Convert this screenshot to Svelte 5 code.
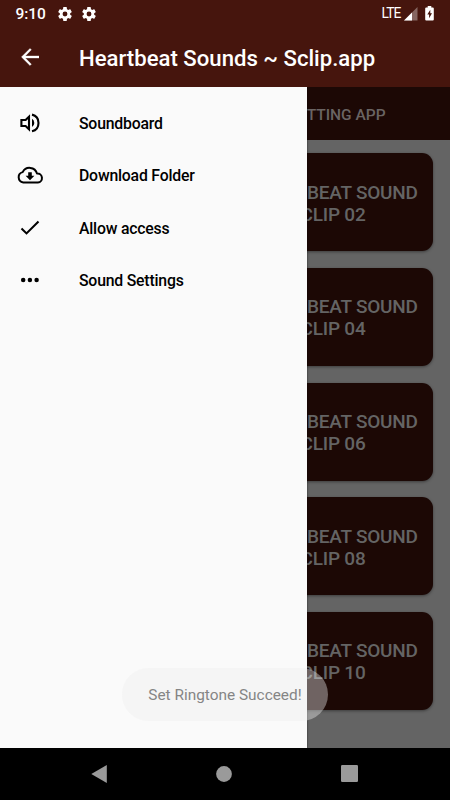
<script>
  const clips = ['02', '04', '06', '08', '10'];
  const gear = 'M19.43 12.98c.04-.32.07-.64.07-.98s-.03-.66-.07-.98l2.11-1.65c.19-.15.24-.42.12-.64l-2-3.46c-.12-.22-.39-.3-.61-.22l-2.49 1c-.52-.4-1.08-.73-1.69-.98l-.38-2.65A.49.49 0 0 0 14 2h-4c-.25 0-.46.18-.49.42l-.38 2.65c-.61.25-1.17.59-1.69.98l-2.49-1c-.23-.09-.49 0-.61.22l-2 3.46c-.13.22-.07.49.12.64l2.11 1.65c-.04.32-.07.65-.07.98s.03.66.07.98l-2.11 1.65c-.19.15-.24.42-.12.64l2 3.46c.12.22.39.3.61.22l2.49-1c.52.4 1.08.73 1.69.98l.38 2.65c.03.24.24.42.49.42h4c.25 0 .46-.18.49-.42l.38-2.65c.61-.25 1.17-.59 1.69-.98l2.49 1c.23.09.49 0 .61-.22l2-3.46c.12-.22.07-.49-.12-.64l-2.11-1.65zM12 15.5a3.5 3.5 0 1 1 0-7 3.5 3.5 0 0 1 0 7z';
</script>

<div class="screen">
  <header>
    <div class="status">
      <span class="time">9:10</span>
      <svg class="gear" viewBox="1.9 1.9 20.2 20.2"><path d={gear} /></svg>
      <svg class="gear" viewBox="1.9 1.9 20.2 20.2"><path d={gear} /></svg>
      <span class="lte">LTE</span>
      <svg class="signal" viewBox="0 0 14 14"><path d="M0 13.5 13.5 0V13.5z" opacity=".35" /><path d="M0 13.5 8 5.5V13.5z" /></svg>
      <svg class="battery" viewBox="0 0 9 15"><path fill-rule="evenodd" d="M2.7 0h3.6v1.4h1.5q1 0 1 1v11q0 1-1 1H1.2q-1 0-1-1v-11q0-1 1-1h1.5zM5.3 3.8 2.3 8.6h1.8v3.7L7 7.3H5.3z" /></svg>
    </div>
    <div class="appbar">
      <svg class="back" viewBox="0 0 18 18"><path d="M18 7.9H4.4l6-6.100L9 .4.400 9 9 17.600l1.400-1.400-6-6.100H18z" stroke="#fff" stroke-width=".3" /></svg>
      <h1>Heartbeat Sounds ~ Sclip.app</h1>
    </div>
  </header>

  <main>
    <div class="tabs"><span>SETTING APP</span></div>
    <div class="list">
      {#each clips as clip}
        <div class="card">HEARTBEAT SOUND<br />CLIP {clip}</div>
      {/each}
    </div>

    <nav class="drawer">
      <div class="item">
        <span class="icon"><svg width="20" height="20" viewBox="0 0 20 20">
          <path d="M1.400 7h4.200l3.400-3.300v12.600L5.600 13H1.400z" fill="none" stroke="#000" stroke-width="2.100" />
          <path d="M12 5.800q2.300 1.400 2.300 4.100T12 14z" />
          <path d="M12 1.600c4.100.9 6.500 4.200 6.500 8.300s-2.400 7.400-6.500 8.300" fill="none" stroke="#000" stroke-width="2.100" />
        </svg></span>
        <span>Soundboard</span>
      </div>
      <div class="item">
        <span class="icon"><svg width="28" height="20" viewBox="0 0 28 20">
          <path d="M7.300 17.500a5.300 5.300 0 0 1-.6-10.400A7.700 7.700 0 0 1 21 8.500a4.500 4.500 0 0 1 .9 9z" fill="none" stroke="#000" stroke-width="2" stroke-linejoin="round" />
          <path d="M12.200 7.300h3.600v3.500h2.600L14 15.200l-4.400-4.400h2.600z" />
        </svg></span>
        <span>Download Folder</span>
      </div>
      <div class="item">
        <span class="icon"><svg width="20" height="16" viewBox="0 0 20 16"><path d="m1.500 8.500 5 4.900L18.500 1.500" fill="none" stroke="#000" stroke-width="2.100" /></svg></span>
        <span>Allow access</span>
      </div>
      <div class="item">
        <span class="icon"><svg width="20" height="6" viewBox="0 0 20 6"><circle cx="3.200" cy="3" r="2.250" /><circle cx="9.900" cy="3" r="2.250" /><circle cx="16.600" cy="3" r="2.250" /></svg></span>
        <span>Sound Settings</span>
      </div>
    </nav>
    <div class="toast"><span>Set Ringtone Succeed!</span></div>
  </main>

  <footer>
    <svg width="16" height="20" viewBox="0 0 16 20"><path d="M.3 10 15.800.900v18.200z" /></svg>
    <svg width="16" height="16" viewBox="0 0 16 16"><circle cx="8" cy="8" r="7.900" /></svg>
    <svg width="17" height="17" viewBox="0 0 17 17"><rect width="17" height="17" rx="1.200" /></svg>
  </footer>
</div>

<style>
  .screen {
    width: 450px;
    height: 800px;
    display: flex;
    flex-direction: column;
    overflow: hidden;
    background: #000;
    font-family: Roboto, sans-serif;
  }
  svg { display: block; flex: none; }
  header { height: 87px; background: #46150d; color: #fff; fill: #fff; }
  .status { height: 28px; display: flex; align-items: center; box-sizing: border-box; padding: 0 16px 0 15.500px; }
  .time { width: 42.500px; font-size: 15.500px; font-weight: 500; letter-spacing: -0.100px; line-height: 28px; }
  .gear { width: 14px; height: 14px; margin-right: 10px; margin-top: -1px; }
  .lte { margin-left: auto; font-size: 13.800px; letter-spacing: -0.900px; line-height: 26px; margin-top: -2px; }
  .signal { width: 14px; height: 14px; margin-left: 3px; margin-top: -1px; }
  .battery { width: 9px; height: 15px; margin-left: 7.500px; margin-top: -1px; }
  .appbar { height: 59px; display: flex; align-items: center; padding-left: 21px; }
  .back { width: 18px; height: 18px; margin-bottom: 2px; }
  h1 { margin: 1px 0 0 40px; font-size: 22.150px; font-weight: 500; line-height: 30px; white-space: nowrap; }
  main { position: relative; height: 661px; background: #646464; overflow: hidden; }
  .tabs {
    height: 53px;
    display: flex;
    align-items: center;
    justify-content: center;
    box-sizing: border-box;
    padding: 2px 1px 0 225px;
    background: #1c0805;
    color: #6a6463;
    font-size: 15.500px;
    font-weight: 500;
  }
  .list { display: flex; flex-direction: column; gap: 16.600px; padding: 13.400px 17px 0 233px; }
  .card {
    height: 98px;
    box-sizing: border-box;
    padding-top: 28.500px;
    border-radius: 11px;
    background: #1c0805;
    box-shadow: 0 1px 3px rgba(0, 0, 0, 0.4);
    color: #646464;
    font-size: 19px;
    font-weight: 500;
    letter-spacing: -0.200px;
    line-height: 22px;
    text-align: center;
    white-space: nowrap;
  }
  .drawer {
    position: absolute;
    inset: 0 auto 0 0;
    width: 306.600px;
    padding-top: 9.500px;
    background: #fafafa;
    box-shadow: 0 0 2px rgba(0, 0, 0, 0.6);
    color: #000;
  }
  .item { height: 52.500px; display: flex; align-items: center; font-size: 15.800px; font-weight: 500; letter-spacing: -0.200px; }
  .item > span:last-child { padding-top: 1px; }
  .icon { width: 60px; margin-right: 19px; display: flex; justify-content: center; }
  .toast {
    position: absolute;
    left: 122px;
    top: 581px;
    width: 206px;
    height: 53px;
    border-radius: 27px;
    display: flex;
    align-items: center;
    justify-content: center;
    background: rgba(238, 238, 238, 0.4);
    color: #858585;
    font-size: 15.400px;
    white-space: nowrap;
  }
  footer { height: 51px; padding: 0 92.300px 1px 91.300px; display: flex; align-items: center; justify-content: space-between; fill: #9a9a9a; }
</style>
